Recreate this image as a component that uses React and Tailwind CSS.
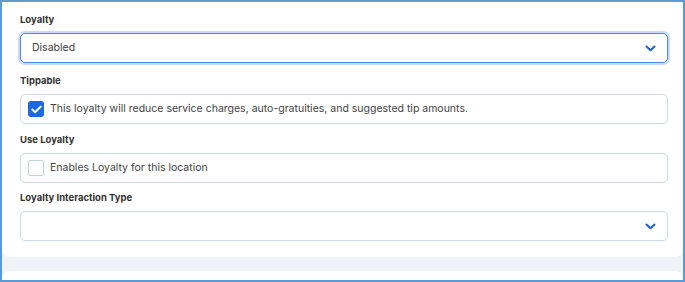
import React from 'react';

const Chevron = () => (
  <svg width="11" height="7" viewBox="0 0 11 7" fill="none" className="shrink-0">
    <path d="M1.5 1.5 L5.5 5.2 L9.5 1.5" stroke="#1f5fd6" strokeWidth="2" strokeLinecap="round" strokeLinejoin="round" />
  </svg>
);

const Label = ({ children }) => (
  <div className="text-[9.5px] font-bold leading-[14px] text-[#333] mb-[6px]">{children}</div>
);

const Select = ({ value, focused }) => (
  <div
    className={`h-[30px] rounded-[5px] bg-white flex items-center justify-between pl-[11px] pr-[11px] ${
      focused
        ? 'border border-[#4f86ec] ring-2 ring-[#c9dafb]'
        : 'border border-[#cbd9e8]'
    }`}
  >
    <span className="text-[10.5px] text-[#3d3d3d]">{value}</span>
    <Chevron />
  </div>
);

const CheckRow = ({ checked, text }) => (
  <div className="h-[30px] rounded-[5px] bg-white border border-[#cbd9e8] flex items-center pl-[7px] gap-[6px]">
    {checked ? (
      <div className="w-[16px] h-[16px] rounded-[3px] bg-[#1c68e3] flex items-center justify-center">
        <svg width="11" height="9" viewBox="0 0 11 9" fill="none">
          <path d="M1.3 4.6 L4.1 7.2 L9.7 1.6" stroke="white" strokeWidth="2" strokeLinecap="round" strokeLinejoin="round" />
        </svg>
      </div>
    ) : (
      <div className="w-[16px] h-[16px] rounded-[3px] bg-white border border-[#c3cfdc]" />
    )}
    <span className="text-[10.5px] text-[#444]">{text}</span>
  </div>
);

export default function App() {
  return (
    <div
      className="w-[685px] h-[282px] border-2 border-[#5b9bd5] bg-[#eff2f6] overflow-hidden flex flex-col"
      style={{ fontFamily: 'Inter, "Noto Sans", sans-serif' }}
    >
      <div className="bg-white rounded-b-lg pl-[18px] pr-[15px] pt-[11px] h-[255px] shrink-0">
        <Label>Loyalty</Label>
        <Select value="Disabled" focused />

        <div className="mt-[11px]">
          <Label>Tippable</Label>
          <CheckRow checked text="This loyalty will reduce service charges, auto-gratuities, and suggested tip amounts." />
        </div>

        <div className="mt-[9px]">
          <Label>Use Loyalty</Label>
          <CheckRow text="Enables Loyalty for this location" />
        </div>

        <div className="mt-[8px]">
          <Label>Loyalty Interaction Type</Label>
          <Select value="" />
        </div>
      </div>
      <div className="mt-[14px] bg-white rounded-t-lg flex-1" />
    </div>
  );
}
